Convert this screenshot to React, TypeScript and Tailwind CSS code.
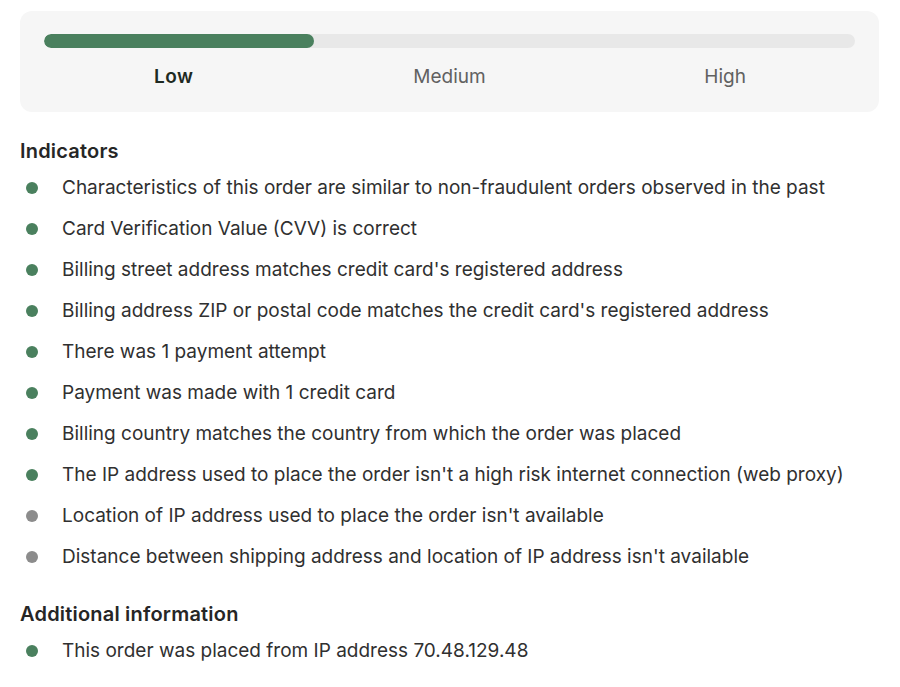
import React from "react";

const indicators: { text: string; ok: boolean }[] = [
  { text: "Characteristics of this order are similar to non-fraudulent orders observed in the past", ok: true },
  { text: "Card Verification Value (CVV) is correct", ok: true },
  { text: "Billing street address matches credit card's registered address", ok: true },
  { text: "Billing address ZIP or postal code matches the credit card's registered address", ok: true },
  { text: "There was 1 payment attempt", ok: true },
  { text: "Payment was made with 1 credit card", ok: true },
  { text: "Billing country matches the country from which the order was placed", ok: true },
  { text: "The IP address used to place the order isn't a high risk internet connection (web proxy)", ok: true },
  { text: "Location of IP address used to place the order isn't available", ok: false },
  { text: "Distance between shipping address and location of IP address isn't available", ok: false },
];

function Row({ text, ok }: { text: string; ok: boolean }) {
  return (
    <li className="flex h-[41px] items-center">
      <span
        className={
          "ml-[6px] mr-[24px] h-[12px] w-[12px] shrink-0 rounded-full " +
          (ok ? "bg-[#4a805e]" : "bg-[#8c8c8c]")
        }
      />
      <span className="pt-[1px] text-[19px] leading-[26px] text-[#303030]">{text}</span>
    </li>
  );
}

export default function App() {
  return (
    <div
      className="min-h-[687px] bg-white px-[20px] pt-[11px]"
      style={{ fontFamily: "Inter, 'Noto Sans', sans-serif" }}
    >
      <div className="h-[101px] w-[859px] rounded-[12px] bg-[#f6f6f6] px-[24px] pt-[23px]">
        <div className="h-[14px] w-full overflow-hidden rounded-full bg-[#e8e8e8]">
          <div className="h-full w-1/3 rounded-full bg-[#4a805e]" />
        </div>
        <div className="-mx-[8px] mt-[16px] grid grid-cols-3 text-center text-[19px] leading-[26px]">
          <span className="font-semibold tracking-[0.5px] text-[#1e2a22]">Low</span>
          <span className="text-[#616161]">Medium</span>
          <span className="text-[#616161]">High</span>
        </div>
      </div>

      <h2 className="mt-[25px] h-[28px] text-[20px] font-semibold leading-[28px] tracking-[0.2px] text-[#262626]">
        Indicators
      </h2>
      <ul className="mt-[2px]">
        {indicators.map((i) => (
          <Row key={i.text} text={i.text} ok={i.ok} />
        ))}
      </ul>

      <h2 className="mt-[23px] h-[28px] text-[20px] font-semibold leading-[28px] tracking-[0.2px] text-[#262626]">
        Additional information
      </h2>
      <ul className="mt-[2px]">
        <Row text="This order was placed from IP address 70.48.129.48" ok={true} />
      </ul>
    </div>
  );
}
